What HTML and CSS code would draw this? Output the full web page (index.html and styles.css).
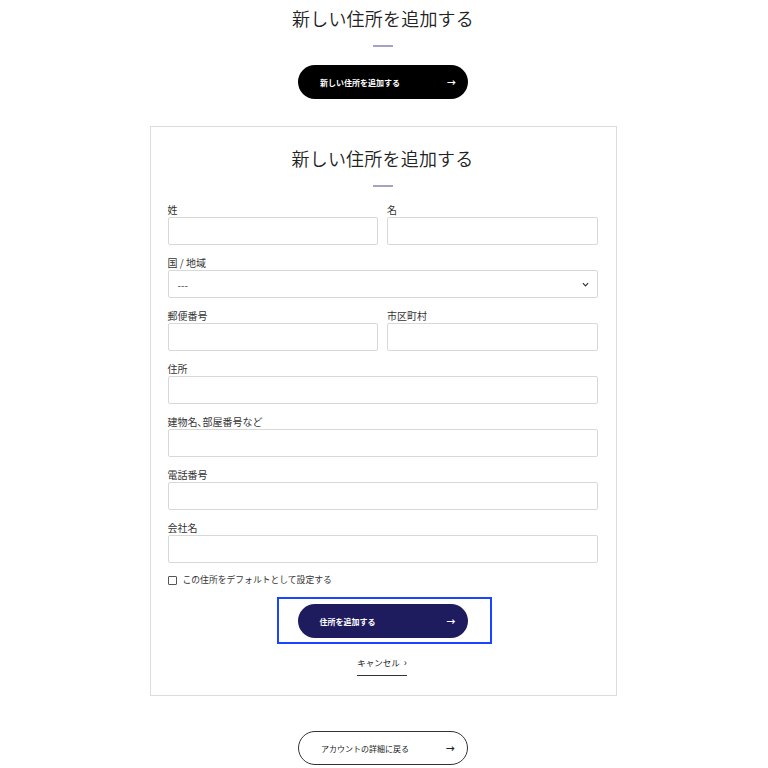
FILE: index.html
```html
<!DOCTYPE html>
<html lang="ja">
<head>
<meta charset="utf-8">
<title>新しい住所を追加する</title>
<link rel="stylesheet" href="styles.css">
</head>
<body>
<main class="page">
  <h1 class="title">新しい住所を追加する</h1>
  <div class="rule"></div>
  <a class="btn btn-black" href="#"><span>新しい住所を追加する</span><span class="arrow">→</span></a>

  <section class="card">
    <h2 class="title">新しい住所を追加する</h2>
    <div class="rule"></div>
    <form class="form">
      <div class="row two">
        <div class="field"><label>姓</label><div class="input"></div></div>
        <div class="field"><label>名</label><div class="input"></div></div>
      </div>
      <div class="row">
        <div class="field"><label>国 / 地域</label>
          <div class="input select"><span>---</span>
            <svg class="chev" viewBox="0 0 8 5" width="7" height="5"><path d="M1 1 L4 4 L7 1" fill="none" stroke="#333" stroke-width="1.4"/></svg>
          </div>
        </div>
      </div>
      <div class="row two">
        <div class="field"><label>郵便番号</label><div class="input"></div></div>
        <div class="field"><label>市区町村</label><div class="input"></div></div>
      </div>
      <div class="row">
        <div class="field"><label>住所</label><div class="input"></div></div>
      </div>
      <div class="row">
        <div class="field"><label>建物名､部屋番号など</label><div class="input"></div></div>
      </div>
      <div class="row">
        <div class="field"><label>電話番号</label><div class="input"></div></div>
      </div>
      <div class="row">
        <div class="field"><label>会社名</label><div class="input"></div></div>
      </div>
      <div class="check"><span class="box"></span><span>この住所をデフォルトとして設定する</span></div>
      <div class="submit-wrap">
        <div class="focus">
          <a class="btn btn-navy" href="#"><span>住所を追加する</span><span class="arrow">→</span></a>
        </div>
      </div>
      <div class="cancel-wrap"><a class="cancel" href="#">キャンセル <span class="gt">›</span></a></div>
    </form>
  </section>

  <a class="btn btn-outline" href="#"><span>アカウントの詳細に戻る</span><span class="arrow">→</span></a>
</main>
</body>
</html>
```

FILE: styles.css
```css
* { box-sizing: border-box; }
html, body { margin: 0; padding: 0; background: #fff; }
body {
  font-family: "Noto Sans CJK JP", "Noto Sans", sans-serif;
  color: #222;
}
.page {
  width: 766px;
  display: flex;
  flex-direction: column;
  align-items: center;
  padding-top: 6px;
}
.title {
  margin: 0;
  font-size: 18px;
  line-height: 24px;
  font-weight: 350;
  letter-spacing: 0.2px;
  color: #222;
  text-align: center;
}
.rule {
  width: 20px;
  height: 2px;
  background: #a4a2c6;
  margin-top: 15px;
}
.btn {
  width: 170px;
  height: 34px;
  border-radius: 17px;
  display: flex;
  align-items: center;
  justify-content: space-between;
  padding: 0 12px 0 22px;
  text-decoration: none;
  font-size: 8px;
  font-weight: 700;
}
.btn .arrow { font-size: 9px; font-weight: 700; }
.btn-black { background: #000; color: #fff; margin-top: 18px; }
.btn-navy { background: #1e1b5e; color: #fff; }
.btn-outline {
  background: #fff;
  color: #222;
  border: 1px solid #333;
  margin-top: 35px;
  font-weight: 400;
}
.card {
  width: 467px;
  margin-top: 27px;
  border: 1px solid #dcdcdc;
  padding: 19px 18px 19px 17px;
  display: flex;
  flex-direction: column;
  align-items: center;
}
.card .rule { margin-top: 15px; }
.form {
  width: 100%;
  margin-top: 16px;
  display: flex;
  flex-direction: column;
  gap: 11px;
}
.row { display: grid; grid-template-columns: 1fr; }
.row.two { grid-template-columns: 1fr 1fr; column-gap: 9px; }
.field { display: flex; flex-direction: column; }
.field label {
  font-size: 10px;
  line-height: 14px;
  color: #333;
}
.input {
  height: 28px;
  border: 1px solid #d8d8d8;
  border-radius: 2px;
  background: #fff;
}
.select {
  display: flex;
  align-items: center;
  justify-content: space-between;
  padding: 0 8px 0 9px;
  font-size: 10px;
  color: #444;
}
.check {
  display: flex;
  align-items: center;
  gap: 6px;
  font-size: 8.8px;
  line-height: 14px;
  color: #333;
  margin-top: -1px;
}
.check .box {
  width: 9px;
  height: 9px;
  border: 1px solid #555;
  border-radius: 1px;
}
.submit-wrap {
  display: flex;
  justify-content: flex-start;
  padding-left: 109px;
  margin-top: -1px;
}
.focus {
  width: 215px;
  border: 2px solid #1a44ff;
  padding: 5px 0 4px 19px;
}
.cancel-wrap { display: flex; justify-content: center; padding-right: 1px; }
.cancel {
  font-size: 8.5px;
  line-height: 13px;
  color: #222;
  text-decoration: none;
  border-bottom: 1px solid #333;
  padding-bottom: 6px;
}
.cancel .gt { font-size: 10px; margin-left: 2px; }
```
